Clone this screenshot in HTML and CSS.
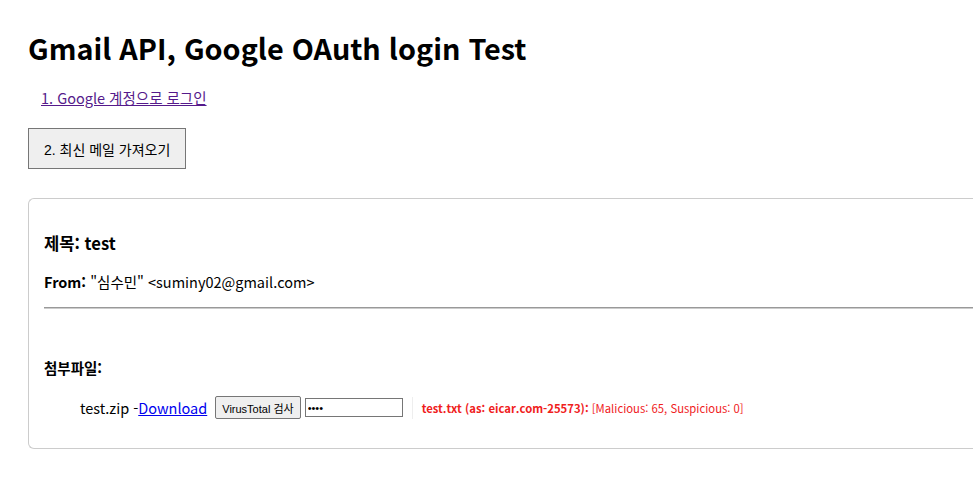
FILE: index.html
```html
<!DOCTYPE html>
<html lang="ko">
<head>
<meta charset="utf-8">
<title>Gmail API, Google OAuth login Test</title>
<link rel="stylesheet" href="styles.css">
</head>
<body>
<h1 class="title">Gmail API, Google OAuth login Test</h1>
<p class="login"><a class="login-link" href="#login">1. Google 계정으로 로그인</a></p>
<button class="fetch-btn" type="button">2. 최신 메일 가져오기</button>
<div class="mail-card">
  <h3 class="subject">제목: test</h3>
  <p class="from"><b>From:</b> "심수민" &lt;suminy02@gmail.com&gt;</p>
  <hr class="divider">
  <h4 class="attach-title">첨부파일:</h4>
  <ul class="attach-list">
    <li class="attach-item">
      <span class="file-name">test.zip -<a class="dl-link" href="#download">Download</a></span>
      <button class="vt-btn" type="button">VirusTotal 검사</button>
      <input class="pw-input" type="password" value="1234">
      <span class="result"><b>test.txt (as: eicar.com-25573):</b> [Malicious: 65, Suspicious: 0]</span>
    </li>
  </ul>
</div>
</body>
</html>
```

FILE: styles.css
```css
html, body {
  overflow: hidden;
}
body {
  margin: 0;
  padding: 0 28px;
  font-family: "Noto Sans CJK KR", "Noto Sans", sans-serif;
  color: #000;
  background: #fff;
}
.title {
  font-size: 28.8px;
  font-weight: 700;
  margin: 28px 0 0;
  line-height: 40px;
}
.login {
  margin: 20px 0 0;
  padding-left: 13px;
  font-size: 14.5px;
  line-height: 20px;
}
.login-link {
  color: #551a8b;
}
.fetch-btn {
  display: block;
  margin-top: 20px;
  height: 41px;
  padding: 0 15px;
  font-family: "Liberation Sans", "Noto Sans CJK KR", sans-serif;
  font-size: 14px;
  color: #000;
  background: #efefef;
  border: 1px solid #767676;
  border-radius: 0;
}
.mail-card {
  box-sizing: border-box;
  margin-top: 29px;
  width: calc(100% + 28px);
  padding: 15px 0 21px 15px;
  border: 1px solid #ccc;
  border-right: 0;
  border-radius: 6px 0 0 6px;
}
.subject {
  font-size: 16.6px;
  font-weight: 700;
  margin: 17px 0 0;
  line-height: 24px;
}
.from {
  font-size: 14.5px;
  margin: 17px 0 0;
  line-height: 20px;
}
.divider {
  margin: 15px 0 0;
  border: 0;
  border-top: 1px solid #999;
  border-bottom: 1px solid #ccc;
  height: 0;
}
.attach-title {
  font-size: 14.5px;
  font-weight: 700;
  margin: 49px 0 0;
  line-height: 20px;
}
.attach-list {
  list-style: none;
  margin: 18px 0 8px;
  padding-left: 36px;
}
.attach-item {
  display: flex;
  align-items: center;
  font-size: 14.5px;
  line-height: 22px;
}
.dl-link {
  color: #0000ee;
}
.vt-btn {
  margin-left: 8px;
  height: 23px;
  padding: 0 6px;
  font-family: "Liberation Sans", "Noto Sans CJK KR", sans-serif;
  font-size: 11px;
  color: #000;
  background: #efefef;
  border: 1px solid #767676;
  border-radius: 2px;
}
.pw-input {
  margin-left: 4px;
  width: 92px;
  height: 15px;
  padding: 1px 2px;
  font-size: 11px;
  border: 1px solid #767676;
  border-radius: 0;
}
.result {
  margin-left: 9px;
  padding-left: 9px;
  border-left: 1px solid #eee;
  font-size: 11.3px;
  color: #f0201c;
}
```
